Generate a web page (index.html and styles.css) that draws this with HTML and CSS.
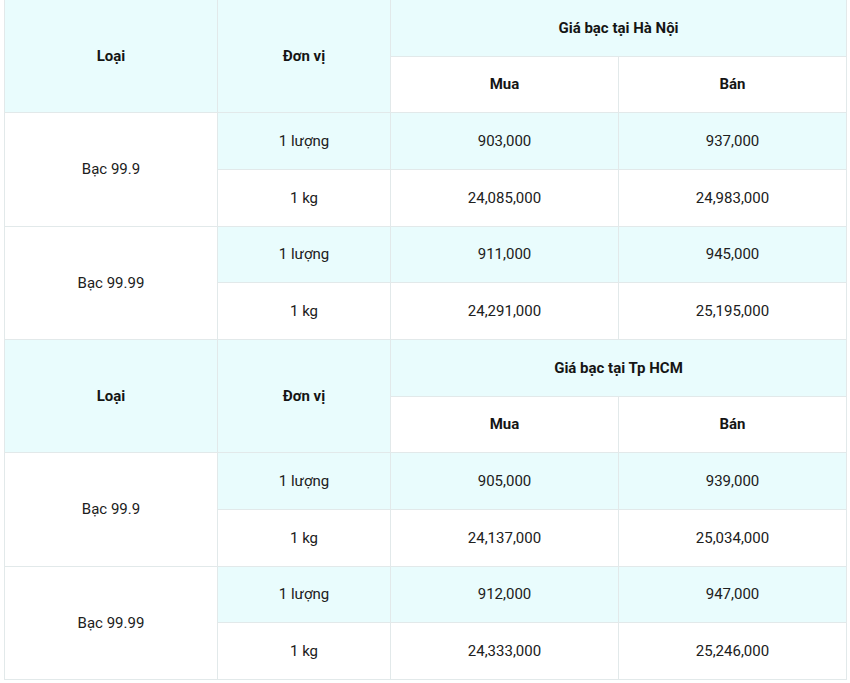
FILE: index.html
```html
<!DOCTYPE html>
<html lang="vi">
<head>
<meta charset="utf-8">
<title>Giá bạc</title>
<link rel="stylesheet" href="styles.css">
</head>
<body>
<table class="price-table">
  <colgroup>
    <col class="col-type">
    <col class="col-unit">
    <col class="col-price">
    <col class="col-price">
  </colgroup>
  <tbody>
    <tr>
      <th class="hl" rowspan="2">Loại</th>
      <th class="hl" rowspan="2">Đơn vị</th>
      <th class="hl" colspan="2">Giá bạc tại Hà Nội</th>
    </tr>
    <tr>
      <th>Mua</th>
      <th>Bán</th>
    </tr>
    <tr class="hl">
      <td class="type" rowspan="2">Bạc 99.9</td>
      <td>1 lượng</td><td>903,000</td><td>937,000</td>
    </tr>
    <tr>
      <td>1 kg</td><td>24,085,000</td><td>24,983,000</td>
    </tr>
    <tr class="hl">
      <td class="type" rowspan="2">Bạc 99.99</td>
      <td>1 lượng</td><td>911,000</td><td>945,000</td>
    </tr>
    <tr>
      <td>1 kg</td><td>24,291,000</td><td>25,195,000</td>
    </tr>
    <tr>
      <th class="hl" rowspan="2">Loại</th>
      <th class="hl" rowspan="2">Đơn vị</th>
      <th class="hl" colspan="2">Giá bạc tại Tp HCM</th>
    </tr>
    <tr>
      <th>Mua</th>
      <th>Bán</th>
    </tr>
    <tr class="hl">
      <td class="type" rowspan="2">Bạc 99.9</td>
      <td>1 lượng</td><td>905,000</td><td>939,000</td>
    </tr>
    <tr>
      <td>1 kg</td><td>24,137,000</td><td>25,034,000</td>
    </tr>
    <tr class="hl">
      <td class="type" rowspan="2">Bạc 99.99</td>
      <td>1 lượng</td><td>912,000</td><td>947,000</td>
    </tr>
    <tr>
      <td>1 kg</td><td>24,333,000</td><td>25,246,000</td>
    </tr>
  </tbody>
</table>
</body>
</html>
```
FILE: styles.css
```css
html, body {
  margin: 0;
  padding: 0;
  background: #ffffff;
}

body {
  font-family: Roboto, "Noto Sans", "Liberation Sans", sans-serif;
  color: #202020;
}

.price-table {
  margin: -1px 0 0 4px;
  width: 842px;
  table-layout: fixed;
  border-collapse: collapse;
  font-size: 15px;
}

.col-type { width: 213px; }
.col-unit { width: 173px; }
.col-price { width: 228px; }

.price-table tr {
  height: 56.67px;
}

.price-table th,
.price-table td {
  border: 1px solid #e2e9ea;
  padding: 0 8px;
  text-align: center;
  vertical-align: middle;
  background: #ffffff;
}

.price-table th {
  font-weight: 700;
  color: #151515;
}

.price-table td {
  font-weight: 400;
}

.price-table th.hl,
.price-table tr.hl td {
  background: #e9fcfd;
}

.price-table tr.hl td.type {
  background: #ffffff;
}
```
